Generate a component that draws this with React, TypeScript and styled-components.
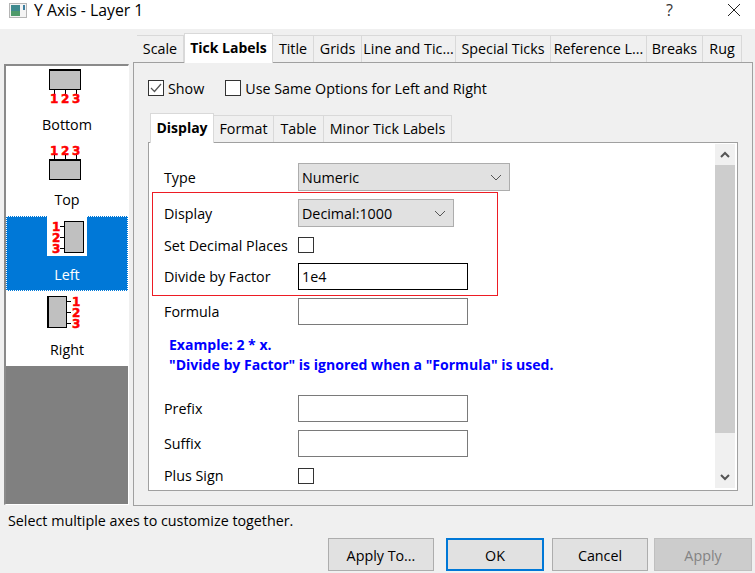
import styled, { createGlobalStyle } from 'styled-components';

const FONT = `'Open Sans', 'Noto Sans', 'Liberation Sans', sans-serif`;

const GlobalStyle = createGlobalStyle`
  html, body {
    margin: 0;
    padding: 0;
    background: #f0f0f0;
    overflow: hidden;
  }
  * {
    box-sizing: border-box;
  }
`;

const Window = styled.div`
  width: 755px;
  height: 573px;
  display: flex;
  flex-direction: column;
  background: #f0f0f0;
  color: #000;
  font-family: ${FONT};
  font-size: 14.3px;
`;

const TitleBar = styled.div`
  height: 29px;
  background: #fff;
  display: flex;
  align-items: flex-start;
  padding: 3px 0 0 9px;
`;
const TitleText = styled.span`
  margin-left: 7px;
  font-size: 15.8px;
  line-height: 15px;
  flex: 1;
`;
const HelpMark = styled.span`
  font-size: 16px;
  line-height: 15px;
  color: #333;
  width: 51px;
`;
const CloseButton = styled.div`
  width: 34px;
  height: 26px;
  margin-right: 4px;
`;

const Body = styled.div`
  display: flex;
  padding: 4px 3px 0 4px;
  height: 477px;
`;

const Sidebar = styled.div`
  width: 125px;
  height: 441px;
  margin-top: 31px;
  display: flex;
  flex-direction: column;
  border-top: 2px solid #8a8a8a;
  border-left: 2px solid #8a8a8a;
  border-right: 1px solid #fff;
  border-bottom: 1px solid #fff;
  background: #808080;
`;
const SideItem = styled.div<{ $selected?: boolean }>`
  height: 75px;
  flex: none;
  display: flex;
  flex-direction: column;
  align-items: center;
  background: ${(p) => (p.$selected ? '#0078d7' : '#fff')};
  color: ${(p) => (p.$selected ? '#fff' : '#000')};
  outline: ${(p) => (p.$selected ? '1px dotted #fff' : 'none')};
  outline-offset: -1px;
`;
const IconSlot = styled.div<{ $mr?: number }>`
  height: 42px;
  margin-right: ${(p) => p.$mr ?? 0}px;
  flex: none;
`;
const SideIcon = styled.svg`
  display: block;
`;
const SideLabel = styled.span`
  line-height: 20px;
  margin-top: 7px;
`;

const Main = styled.div`
  width: 620px;
  margin-left: 4px;
  display: flex;
  flex-direction: column;
`;
const TabBar = styled.div`
  display: flex;
  align-items: flex-end;
  height: 29px;
  padding-left: 4px;
  position: relative;
  z-index: 1;
`;
const Tab = styled.div<{ $w: number; $active?: boolean }>`
  width: ${(p) => p.$w}px;
  height: ${(p) => (p.$active ? 30 : 27)}px;
  margin-bottom: ${(p) => (p.$active ? -1 : 0)}px;
  padding-bottom: 2px;
  background: ${(p) => (p.$active ? '#fff' : '#f0f0f0')};
  border: 1px solid #d9d9d9;
  border-bottom: none;
  border-left-width: ${(p) => (p.$active ? 1 : 0)}px;
  font-weight: ${(p) => (p.$active ? 700 : 400)};
  font-size: ${(p) => (p.$active ? '14px' : 'inherit')};
  display: flex;
  align-items: center;
  justify-content: center;
  white-space: nowrap;
  flex: none;
`;
const Panel = styled.div`
  flex: none;
  height: 444px;
  width: 620px;
  border: 1px solid #a0a0a0;
  background: #f0f0f0;
  padding: 0 14px;
  display: flex;
  flex-direction: column;
`;
const OptionsRow = styled.div`
  display: flex;
  align-items: center;
  height: 50px;
`;
const CheckOption = styled.label<{ $mr?: number }>`
  display: flex;
  align-items: center;
  gap: 4px;
  margin-right: ${(p) => p.$mr ?? 0}px;
`;
const CheckBox = styled.span`
  width: 16px;
  height: 16px;
  border: 1px solid #333;
  background: #fff;
  display: flex;
  align-items: center;
  justify-content: center;
  flex: none;
`;
const SubTabBar = styled(TabBar)`
  padding-left: 2px;
  height: 29px;
`;
const InnerPanel = styled.div`
  flex: none;
  width: 590px;
  height: 349px;
  border: 1px solid #a0a0a0;
  background: #fff;
  display: flex;
  overflow: hidden;
`;
const Form = styled.div`
  flex: 1;
  padding: 20px 0 0 3px;
  display: flex;
  flex-direction: column;
`;
const Row = styled.div<{ $h: number; $mt?: number; $pl?: number }>`
  height: ${(p) => p.$h}px;
  margin-top: ${(p) => p.$mt ?? 0}px;
  padding-left: ${(p) => p.$pl ?? 12}px;
  display: flex;
  align-items: center;
  flex: none;
`;
const Label = styled.span`
  width: 134px;
  flex: none;
  white-space: nowrap;
`;
const Combo = styled.div<{ $w: number }>`
  width: ${(p) => p.$w}px;
  height: 100%;
  background: #e1e1e1;
  border: 1px solid #adadad;
  display: flex;
  align-items: center;
  justify-content: space-between;
  padding: 0 7px 0 3px;
`;
const TextBox = styled.div<{ $dark?: boolean }>`
  width: 170px;
  height: 100%;
  background: #fff;
  border: 1px solid ${(p) => (p.$dark ? '#000' : '#7a7a7a')};
  display: flex;
  align-items: center;
  padding-left: 3px;
`;
const HighlightGroup = styled.div`
  width: 346px;
  height: 104px;
  margin-top: 1px;
  border: 1px solid #ed1c24;
  padding-top: 6px;
  display: flex;
  flex-direction: column;
  flex: none;
`;
const Hint = styled.div`
  margin: 10px 0 0 17px;
  height: 60px;
  color: #0000ff;
  font-weight: 700;
  font-size: 14.05px;
  line-height: 20px;
  flex: none;
  white-space: nowrap;
`;
const ScrollTrack = styled.div`
  width: 20px;
  margin: 1px 2px 2px 0;
  background: #f0f0f0;
  display: flex;
  flex-direction: column;
  flex: none;
`;
const ScrollArrow = styled.div`
  height: 21px;
  display: flex;
  align-items: center;
  justify-content: center;
  flex: none;
`;
const ScrollThumb = styled.div`
  height: 268px;
  background: #cdcdcd;
  flex: none;
`;
const ScrollGap = styled.div`
  flex: 1;
`;

const StatusText = styled.div`
  height: 32px;
  padding-left: 8px;
  line-height: 29px;
  flex: none;
`;
const ButtonBar = styled.div`
  display: flex;
  padding-left: 328px;
  flex: none;
`;
const Button = styled.div<{ $w: number; $ml?: number; $primary?: boolean; $disabled?: boolean }>`
  width: ${(p) => p.$w}px;
  height: 33px;
  margin-left: ${(p) => p.$ml ?? 0}px;
  padding-top: 2px;
  background: ${(p) => (p.$disabled ? '#cccccc' : '#e1e1e1')};
  border: ${(p) => (p.$primary ? '2px solid #0078d7' : `1px solid ${p.$disabled ? '#bfbfbf' : '#adadad'}`)};
  color: ${(p) => (p.$disabled ? '#838383' : '#000')};
  display: flex;
  align-items: center;
  justify-content: center;
  flex: none;
`;

const Chevron = () => (
  <svg width="12" height="7" viewBox="0 0 12 7">
    <path d="M1 1l5 5 5-5" fill="none" stroke="#555" strokeWidth="1" />
  </svg>
);
const ScrollChevron = ({ up }: { up?: boolean }) => (
  <svg width="10" height="7" viewBox="0 0 10 7">
    <path d={up ? 'M1 6l4-4 4 4' : 'M1 1l4 4 4-4'} fill="none" stroke="#555" strokeWidth="2" />
  </svg>
);
const Tick = () => (
  <svg width="12" height="10" viewBox="0 0 12 10">
    <path d="M1 5l3.5 3.5L11 1" fill="none" stroke="#555" strokeWidth="1.2" />
  </svg>
);

const NUM = {
  fill: '#f00',
  stroke: '#f00',
  strokeWidth: 0.5,
  fontFamily: 'DejaVu Sans, sans-serif',
  fontWeight: 700,
  fontSize: 12,
};

const BottomIcon = () => (
  <SideIcon width="124" height="42" viewBox="0 0 124 42">
    <rect x="44.5" y="3.5" width="31" height="20" fill="#c0c0c0" stroke="#000" />
    <rect x="44" y="3" width="32" height="2" fill="#000" />
    <path d="M49.5 24v4M60.5 24v4M71.5 24v4" stroke="#000" />
    <text x="45" y="37" {...NUM}>1</text>
    <text x="56" y="37" {...NUM}>2</text>
    <text x="67" y="37" {...NUM}>3</text>
  </SideIcon>
);
const TopIcon = () => (
  <SideIcon width="124" height="42" viewBox="0 0 124 42">
    <text x="45" y="14" {...NUM}>1</text>
    <text x="56" y="14" {...NUM}>2</text>
    <text x="67" y="14" {...NUM}>3</text>
    <path d="M49.5 14v4M60.5 14v4M71.5 14v4" stroke="#000" />
    <rect x="44.5" y="18.5" width="31" height="20" fill="#c0c0c0" stroke="#000" />
    <rect x="44" y="18" width="32" height="2" fill="#000" />
  </SideIcon>
);
const LeftIcon = () => (
  <SideIcon width="40" height="40" viewBox="0 0 40 40">
    <rect width="40" height="40" fill="#fff" />
    <rect x="17.5" y="5.5" width="19" height="31" fill="#c0c0c0" stroke="#000" />
    <path d="M13 10.5h4M13 21.5h4M13 32.5h4" stroke="#000" />
    <text x="5" y="15" {...NUM}>1</text>
    <text x="5" y="26" {...NUM}>2</text>
    <text x="5" y="37" {...NUM}>3</text>
  </SideIcon>
);
const RightIcon = () => (
  <SideIcon width="124" height="42" viewBox="0 0 124 42">
    <rect x="42.5" y="5.5" width="19" height="31" fill="#c0c0c0" stroke="#000" />
    <rect x="42" y="5" width="2" height="32" fill="#000" />
    <path d="M62 10.5h4M62 21.5h4M62 32.5h4" stroke="#000" />
    <text x="67" y="15" {...NUM}>1</text>
    <text x="67" y="26" {...NUM}>2</text>
    <text x="67" y="37" {...NUM}>3</text>
  </SideIcon>
);
const AppIcon = () => (
  <svg width="18" height="15" viewBox="0 0 18 15">
    <rect x="0.5" y="0.5" width="17" height="14" fill="#f4f4f4" stroke="#b5b5b5" />
    <rect x="2" y="2" width="9" height="11" fill="#3e8a8f" />
    <rect x="2" y="8" width="9" height="5" fill="#4e9a6a" />
    <rect x="14" y="2" width="2" height="5" fill="#3e7f9f" />
  </svg>
);

const mainTabs: [string, number][] = [
  ['Scale', 47],
  ['Tick Labels', 89],
  ['Title', 41],
  ['Grids', 48],
  ['Line and Tic...', 94],
  ['Special Ticks', 95],
  ['Reference L...', 96],
  ['Breaks', 56],
  ['Rug', 39],
];
const subTabs: [string, number][] = [
  ['Display', 64],
  ['Format', 60],
  ['Table', 50],
  ['Minor Tick Labels', 128],
];

function App() {
  return (
    <Window>
      <GlobalStyle />
      <TitleBar>
        <AppIcon />
        <TitleText>Y Axis - Layer 1</TitleText>
        <HelpMark>?</HelpMark>
        <CloseButton>
          <svg width="34" height="26" viewBox="0 0 34 26">
            <path d="M11 1l12 12M23 1L11 13" stroke="#222" strokeWidth="1" fill="none" />
          </svg>
        </CloseButton>
      </TitleBar>
      <Body>
        <Sidebar>
          <SideItem>
            <IconSlot>
              <BottomIcon />
            </IconSlot>
            <SideLabel>Bottom</SideLabel>
          </SideItem>
          <SideItem>
            <IconSlot>
              <TopIcon />
            </IconSlot>
            <SideLabel>Top</SideLabel>
          </SideItem>
          <SideItem $selected>
            <IconSlot $mr={1}>
              <LeftIcon />
            </IconSlot>
            <SideLabel>Left</SideLabel>
          </SideItem>
          <SideItem>
            <IconSlot>
              <RightIcon />
            </IconSlot>
            <SideLabel>Right</SideLabel>
          </SideItem>
        </Sidebar>
        <Main>
          <TabBar>
            {mainTabs.map(([name, w]) => (
              <Tab key={name} $w={w} $active={name === 'Tick Labels'}>
                {name}
              </Tab>
            ))}
          </TabBar>
          <Panel>
            <OptionsRow>
              <CheckOption $mr={21}>
                <CheckBox>
                  <Tick />
                </CheckBox>
                Show
              </CheckOption>
              <CheckOption>
                <CheckBox />
                Use Same Options for Left and Right
              </CheckOption>
            </OptionsRow>
            <SubTabBar>
              {subTabs.map(([name, w]) => (
                <Tab key={name} $w={w} $active={name === 'Display'}>
                  {name}
                </Tab>
              ))}
            </SubTabBar>
            <InnerPanel>
              <Form>
                <Row $h={28}>
                  <Label>Type</Label>
                  <Combo $w={212}>
                    Numeric
                    <Chevron />
                  </Combo>
                </Row>
                <HighlightGroup>
                  <Row $h={28} $pl={11}>
                    <Label>Display</Label>
                    <Combo $w={156}>
                      Decimal:1000
                      <Chevron />
                    </Combo>
                  </Row>
                  <Row $h={26} $mt={5} $pl={11}>
                    <Label>Set Decimal Places</Label>
                    <CheckBox />
                  </Row>
                  <Row $h={27} $mt={5} $pl={11}>
                    <Label>Divide by Factor</Label>
                    <TextBox $dark>1e4</TextBox>
                  </Row>
                </HighlightGroup>
                <Row $h={27} $mt={2}>
                  <Label>Formula</Label>
                  <TextBox />
                </Row>
                <Hint>
                  Example: 2 * x.
                  <br />
                  "Divide by Factor" is ignored when a "Formula" is used.
                </Hint>
                <Row $h={27}>
                  <Label>Prefix</Label>
                  <TextBox />
                </Row>
                <Row $h={27} $mt={8}>
                  <Label>Suffix</Label>
                  <TextBox />
                </Row>
                <Row $h={27} $mt={5}>
                  <Label>Plus Sign</Label>
                  <CheckBox />
                </Row>
              </Form>
              <ScrollTrack>
                <ScrollArrow>
                  <ScrollChevron up />
                </ScrollArrow>
                <ScrollThumb />
                <ScrollGap />
                <ScrollArrow>
                  <ScrollChevron />
                </ScrollArrow>
              </ScrollTrack>
            </InnerPanel>
          </Panel>
        </Main>
      </Body>
      <StatusText>Select multiple axes to customize together.</StatusText>
      <ButtonBar>
        <Button $w={106}>Apply To...</Button>
        <Button $w={98} $ml={12} $primary>
          OK
        </Button>
        <Button $w={96} $ml={8}>
          Cancel
        </Button>
        <Button $w={98} $ml={6} $disabled>
          Apply
        </Button>
      </ButtonBar>
    </Window>
  );
}

export default App;
